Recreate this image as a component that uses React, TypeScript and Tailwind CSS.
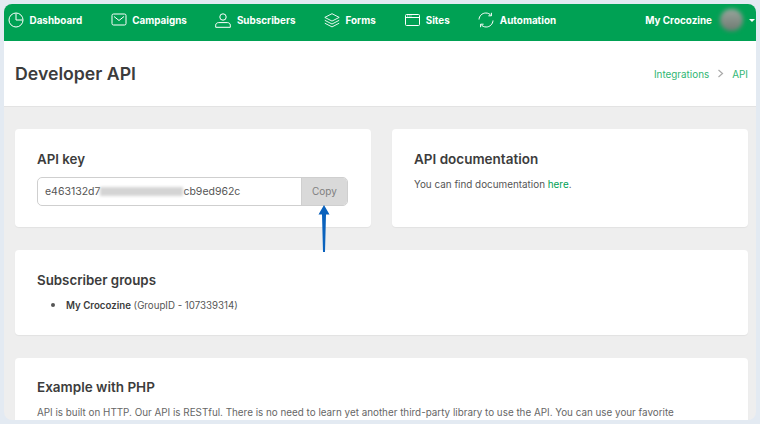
import React from 'react';

const navItems = [
  { label: 'Dashboard', icon: <svg width="16" height="16" viewBox="0 0 16 16" fill="none" stroke="currentColor" strokeWidth="1"><path d="M8 1.5v6.5h6.5" /><circle cx="8" cy="8" r="7" /></svg> },
  { label: 'Campaigns', icon: <svg width="16" height="13" viewBox="0 0 16 13" fill="none" stroke="currentColor" strokeWidth="1"><rect x="1" y="1" width="14" height="11" rx="1.5" /><path d="M3 3.5L8 7.5l5-4" /></svg> },
  { label: 'Subscribers', icon: <svg width="16" height="15" viewBox="0 0 16 15" fill="none" stroke="currentColor" strokeWidth="1"><circle cx="8" cy="4" r="3.2" /><path d="M0.7 14.3v-2.2c0-1.6 1.4-2.5 3-2.5h8.6c1.6 0 3 .9 3 2.5v2.2z" /></svg> },
  { label: 'Forms', icon: <svg width="16" height="15" viewBox="0 0 16 15" fill="none" stroke="currentColor" strokeWidth="0.9"><path d="M8 .7l7.2 3.7L8 8.1.8 4.4z" /><path d="M.8 7.3L8 11l7.2-3.7" /><path d="M.8 10.2L8 13.9l7.2-3.7" /></svg> },
  { label: 'Sites', icon: <svg width="15" height="12" viewBox="0 0 15 12" fill="none" stroke="currentColor" strokeWidth="1"><rect x="0.5" y="0.5" width="14" height="11" rx="1" /><path d="M.5 3.5h14" /><path d="M2 2h.8M3.8 2h.8M5.6 2h.8" /></svg> },
  { label: 'Automation', icon: <svg width="16" height="16" viewBox="0 0 16 16" fill="none" stroke="currentColor" strokeWidth="1"><path d="M1 7.5C1.2 3.8 4.2 1 7.8 1c2.2 0 4 .9 5.3 2.5" /><path d="M13.4.8v3h-3" /><path d="M15 8.5c-.2 3.7-3.2 6.5-6.8 6.5-2.2 0-4-.9-5.3-2.5" /><path d="M2.6 15.2v-3h3" /></svg> },
];

const Card = ({ className, children }: { className: string; children: React.ReactNode }) => (
  <div className={`bg-white rounded-[4px] shadow-[0_1px_1px_rgba(0,0,0,0.05)] ${className}`}>{children}</div>
);

export default function App() {
  return (
    <div className="w-[760px] h-[424px] bg-[#e3eaf2] p-[4px] overflow-hidden font-['Inter','Liberation_Sans',sans-serif]">
      <div className="relative h-[416px] rounded-[8px] overflow-hidden bg-[#eeeeee] flex flex-col">
        <div className="h-[37px] shrink-0 bg-[#00a154] text-white flex items-center pl-[4px] pr-[1px] pb-[5px] text-[9.9px] font-bold">
          <div className="flex items-center gap-[28.5px]">
            {navItems.map((item) => (
              <div key={item.label} className="flex items-center gap-[5.5px]">
                <span className="w-[16px] flex justify-center">{item.icon}</span>
                <span>{item.label}</span>
              </div>
            ))}
          </div>
          <div className="ml-auto flex items-center">
            <span>My Crocozine</span>
            <span className="ml-[8px] w-[23px] h-[22px] rounded-full bg-gradient-to-b from-[#9aa59d] to-[#6f7a72] blur-[2px]" />
            <span className="ml-[6px] w-0 h-0 border-x-[3px] border-x-transparent border-t-[3px] border-t-white" />
          </div>
        </div>

        <div className="h-[66px] shrink-0 bg-white border-b border-[#e3e3e3] flex items-center justify-between pl-[11px] pr-[8px] pt-[1px]">
          <h1 className="text-[17.7px] font-semibold text-[#3c3c3c]">Developer API</h1>
          <div className="flex items-center text-[9.9px] text-[#2fb673]">
            <span>Integrations</span>
            <svg className="mx-[8px]" width="7" height="9" viewBox="0 0 7 9" fill="none" stroke="#aaaaaa" strokeWidth="1.2"><path d="M1.5 1l4 3.5-4 3.5" /></svg>
            <span>API</span>
          </div>
        </div>

        <div className="flex-1 pl-[11px] pr-[8px] pt-[22px] flex flex-col gap-[23px] overflow-hidden">
          <div className="flex gap-[21px] shrink-0">
            <Card className="relative w-[356px] h-[98px] pl-[22px] pr-[23px] pt-[22px]">
              <h2 className="text-[13.3px] leading-[16px] font-semibold text-[#3c3c3c]">API key</h2>
              <div className="mt-[10px] h-[29px] flex rounded-[5px] border-[1.5px] border-[#cfcfcf] overflow-hidden text-[10.5px] text-[#555555]">
                <div className="flex-1 flex items-center pl-[7px]">
                  <span>e463132d7</span>
                  <span className="w-[83px] h-[9px] bg-[#d4d4d4] blur-[1.5px]" />
                  <span>cb9ed962c</span>
                </div>
                <div className="w-[46px] bg-[#d9d9d9] border-l border-[#cfcfcf] flex items-center justify-center text-[10px] text-[#808080]">Copy</div>
              </div>
              <svg className="absolute left-[303px] top-[76px]" width="12" height="47" viewBox="0 0 12 47" fill="#0a62bd"><path d="M6 0L11.5 9.5H8L7 47H5L4 9.5H.5z" /></svg>
            </Card>
            <Card className="w-[356px] h-[98px] px-[22px] pt-[22px]">
              <h2 className="text-[13.5px] leading-[16px] font-semibold text-[#3c3c3c]">API documentation</h2>
              <p className="mt-[10px] text-[9.9px] leading-[14px] text-[#555555]">You can find documentation <span className="text-[#00a154]">here</span>.</p>
            </Card>
          </div>

          <Card className="h-[85px] shrink-0 px-[22px] pt-[22px]">
            <h2 className="text-[13.3px] leading-[16px] font-semibold text-[#3c3c3c]">Subscriber groups</h2>
            <ul className="mt-[9px] pl-[29px] list-disc marker:text-[13px] text-[9.7px] leading-[14px] text-[#555555]">
              <li><span className="font-semibold text-[#3c3c3c]">My Crocozine</span> (GroupID - 107339314)</li>
            </ul>
          </Card>

          <Card className="flex-1 rounded-b-none px-[22px] pt-[21px] overflow-hidden">
            <h2 className="text-[13.5px] leading-[16px] font-semibold text-[#3c3c3c]">Example with PHP</h2>
            <p className="mt-[10px] text-[9.85px] leading-[14px] text-[#666666] whitespace-nowrap">API is built on HTTP. Our API is RESTful. There is no need to learn yet another third-party library to use the API. You can use your favorite</p>
          </Card>
        </div>
      </div>
    </div>
  );
}
